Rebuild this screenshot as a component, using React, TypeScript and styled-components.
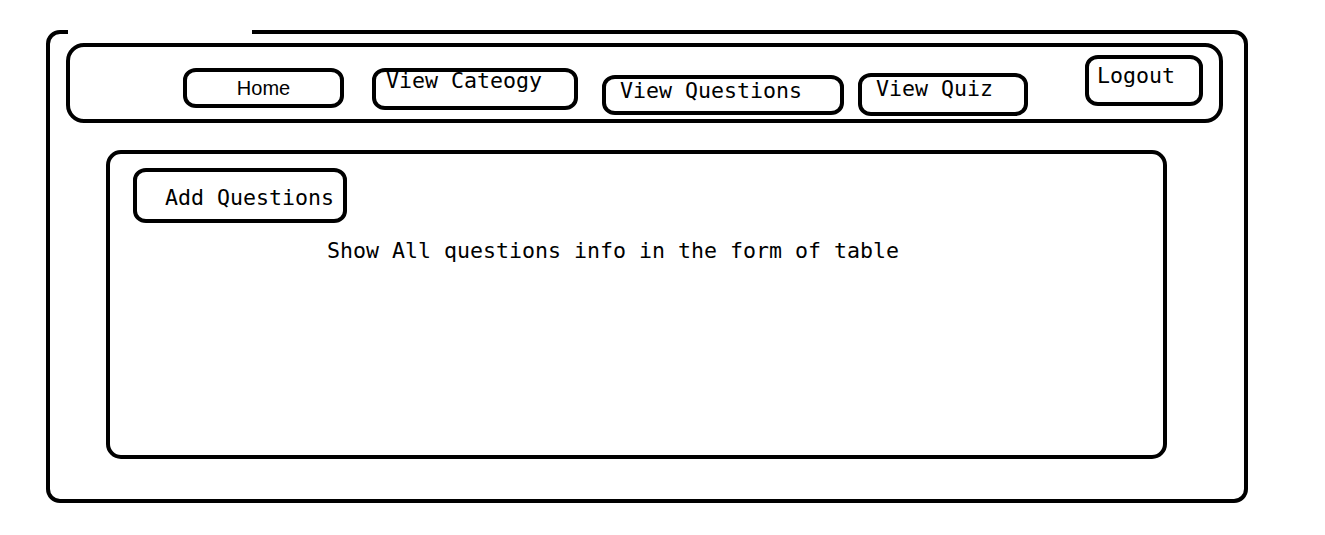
import React from "react";
import styled, { createGlobalStyle } from "styled-components";

const Global = createGlobalStyle`
  html, body { margin: 0; padding: 0; background: #ffffff; }
  body { width: 1325px; height: 535px; overflow: hidden; font-family: "DejaVu Sans Mono", monospace; color: #000; }
`;

const Page = styled.div`
  padding: 30px 0 0 46px;
`;

const Frame = styled.div`
  position: relative;
  box-sizing: border-box;
  width: 1202px;
  height: 473px;
  border: 4px solid #000;
  border-radius: 14px;
  display: flex;
  flex-direction: column;
  align-items: flex-start;
`;

const TitleGap = styled.div`
  position: absolute;
  top: -6px;
  left: 18px;
  width: 184px;
  height: 8px;
  background: #fff;
`;

const Nav = styled.nav`
  box-sizing: border-box;
  margin: 9px 0 0 16px;
  width: 1157px;
  height: 80px;
  border: 4px solid #000;
  border-radius: 18px;
  display: flex;
  align-items: flex-start;
`;

const Sketch = styled.div<{ $w: number; $h: number; $ml?: number; $mt?: number }>`
  box-sizing: border-box;
  flex: none;
  width: ${(p) => p.$w}px;
  height: ${(p) => p.$h}px;
  margin-left: ${(p) => p.$ml ?? 0}px;
  margin-top: ${(p) => p.$mt ?? 0}px;
  border: 4px solid #000;
  border-radius: 13px / 12px;
  display: flex;
  align-items: flex-start;
  background: #fff;
`;

const Label = styled.span<{ $x: number; $y: number }>`
  display: block;
  margin-left: ${(p) => p.$x}px;
  margin-top: ${(p) => p.$y}px;
  font-family: "DejaVu Sans Mono", monospace;
  font-size: 21.6px;
  line-height: 24px;
  white-space: nowrap;
`;

const SansSketch = styled(Sketch)`
  align-items: center;
  justify-content: center;
`;

const SansLabel = styled.span`
  font-family: "Liberation Sans", Arial, sans-serif;
  font-size: 20px;
  line-height: 22px;
  margin-left: 0px;
`;

const Content = styled.main`
  box-sizing: border-box;
  margin: 27px 0 0 56px;
  width: 1061px;
  height: 309px;
  border: 4px solid #000;
  border-radius: 15px;
  display: flex;
  flex-direction: column;
  align-items: flex-start;
`;

const Note = styled.p`
  margin: 16px 0 0 217px;
  font-family: "DejaVu Sans Mono", monospace;
  font-size: 21.6px;
  line-height: 24px;
  white-space: nowrap;
`;

export default function App() {
  return (
    <>
      <Global />
      <Page>
        <Frame>
          <TitleGap />
          <Nav>
            <SansSketch $w={161} $h={40} $ml={113} $mt={21}>
              <SansLabel>Home</SansLabel>
            </SansSketch>
            <Sketch $w={206} $h={42} $ml={28} $mt={21}>
              <Label $x={10} $y={-3}>View Cateogy</Label>
            </Sketch>
            <Sketch $w={242} $h={40} $ml={24} $mt={28}>
              <Label $x={14} $y={0}>View Questions</Label>
            </Sketch>
            <Sketch $w={170} $h={43} $ml={14} $mt={26}>
              <Label $x={14} $y={0}>View Quiz</Label>
            </Sketch>
            <Sketch $w={118} $h={51} $ml={57} $mt={8}>
              <Label $x={8} $y={5}>Logout</Label>
            </Sketch>
          </Nav>
          <Content>
            <Sketch $w={214} $h={55} $ml={23} $mt={14}>
              <Label $x={28} $y={14}>Add Questions</Label>
            </Sketch>
            <Note>Show All questions info in the form of table</Note>
          </Content>
        </Frame>
      </Page>
    </>
  );
}
